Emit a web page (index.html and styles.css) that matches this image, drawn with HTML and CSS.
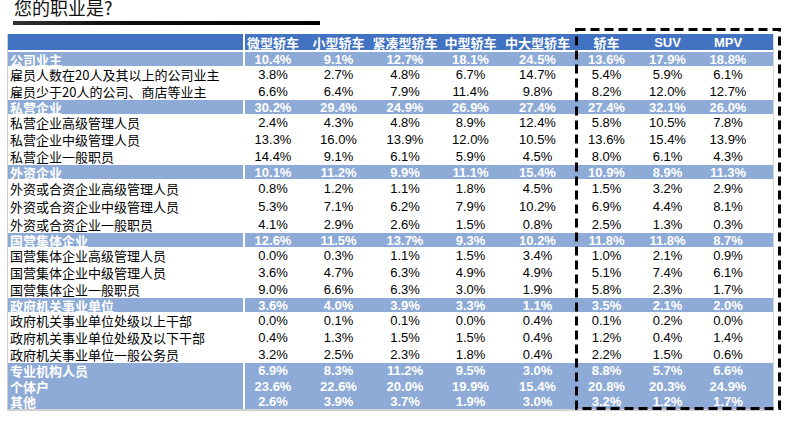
FILE: index.html
```html
<!DOCTYPE html>
<html lang="zh">
<head>
<meta charset="utf-8">
<title>您的职业是?</title>
<link rel="stylesheet" href="styles.css">
</head>
<body>
<div class="page">
  <h1 class="title">您的职业是?</h1>
  <div class="rule"></div>
  <div class="table">
    <div class="row head">
      <div class="lbl"></div>
      <div class="c c1">微型轿车</div><div class="c c2">小型轿车</div><div class="c c3">紧凑型轿车</div><div class="c c4">中型轿车</div><div class="c c5">中大型轿车</div><div class="c c6">轿车</div><div class="c c7">SUV</div><div class="c c8">MPV</div>
    </div>
    <div class="row cat">
      <div class="lbl">公司业主</div>
      <div class="c c1">10.4%</div><div class="c c2">9.1%</div><div class="c c3">12.7%</div><div class="c c4">18.1%</div><div class="c c5">24.5%</div><div class="c c6">13.6%</div><div class="c c7">17.9%</div><div class="c c8">18.8%</div>
    </div>
    <div class="row">
      <div class="lbl">雇员人数在20人及其以上的公司业主</div>
      <div class="c c1">3.8%</div><div class="c c2">2.7%</div><div class="c c3">4.8%</div><div class="c c4">6.7%</div><div class="c c5">14.7%</div><div class="c c6">5.4%</div><div class="c c7">5.9%</div><div class="c c8">6.1%</div>
    </div>
    <div class="row">
      <div class="lbl">雇员少于20人的公司、商店等业主</div>
      <div class="c c1">6.6%</div><div class="c c2">6.4%</div><div class="c c3">7.9%</div><div class="c c4">11.4%</div><div class="c c5">9.8%</div><div class="c c6">8.2%</div><div class="c c7">12.0%</div><div class="c c8">12.7%</div>
    </div>
    <div class="row cat">
      <div class="lbl">私营企业</div>
      <div class="c c1">30.2%</div><div class="c c2">29.4%</div><div class="c c3">24.9%</div><div class="c c4">26.9%</div><div class="c c5">27.4%</div><div class="c c6">27.4%</div><div class="c c7">32.1%</div><div class="c c8">26.0%</div>
    </div>
    <div class="row">
      <div class="lbl">私营企业高级管理人员</div>
      <div class="c c1">2.4%</div><div class="c c2">4.3%</div><div class="c c3">4.8%</div><div class="c c4">8.9%</div><div class="c c5">12.4%</div><div class="c c6">5.8%</div><div class="c c7">10.5%</div><div class="c c8">7.8%</div>
    </div>
    <div class="row">
      <div class="lbl">私营企业中级管理人员</div>
      <div class="c c1">13.3%</div><div class="c c2">16.0%</div><div class="c c3">13.9%</div><div class="c c4">12.0%</div><div class="c c5">10.5%</div><div class="c c6">13.6%</div><div class="c c7">15.4%</div><div class="c c8">13.9%</div>
    </div>
    <div class="row">
      <div class="lbl">私营企业一般职员</div>
      <div class="c c1">14.4%</div><div class="c c2">9.1%</div><div class="c c3">6.1%</div><div class="c c4">5.9%</div><div class="c c5">4.5%</div><div class="c c6">8.0%</div><div class="c c7">6.1%</div><div class="c c8">4.3%</div>
    </div>
    <div class="row cat">
      <div class="lbl">外资企业</div>
      <div class="c c1">10.1%</div><div class="c c2">11.2%</div><div class="c c3">9.9%</div><div class="c c4">11.1%</div><div class="c c5">15.4%</div><div class="c c6">10.9%</div><div class="c c7">8.9%</div><div class="c c8">11.3%</div>
    </div>
    <div class="row tall">
      <div class="lbl">外资或合资企业高级管理人员</div>
      <div class="c c1">0.8%</div><div class="c c2">1.2%</div><div class="c c3">1.1%</div><div class="c c4">1.8%</div><div class="c c5">4.5%</div><div class="c c6">1.5%</div><div class="c c7">3.2%</div><div class="c c8">2.9%</div>
    </div>
    <div class="row tall">
      <div class="lbl">外资或合资企业中级管理人员</div>
      <div class="c c1">5.3%</div><div class="c c2">7.1%</div><div class="c c3">6.2%</div><div class="c c4">7.9%</div><div class="c c5">10.2%</div><div class="c c6">6.9%</div><div class="c c7">4.4%</div><div class="c c8">8.1%</div>
    </div>
    <div class="row tall">
      <div class="lbl">外资或合资企业一般职员</div>
      <div class="c c1">4.1%</div><div class="c c2">2.9%</div><div class="c c3">2.6%</div><div class="c c4">1.5%</div><div class="c c5">0.8%</div><div class="c c6">2.5%</div><div class="c c7">1.3%</div><div class="c c8">0.3%</div>
    </div>
    <div class="row cat">
      <div class="lbl">国营集体企业</div>
      <div class="c c1">12.6%</div><div class="c c2">11.5%</div><div class="c c3">13.7%</div><div class="c c4">9.3%</div><div class="c c5">10.2%</div><div class="c c6">11.8%</div><div class="c c7">11.8%</div><div class="c c8">8.7%</div>
    </div>
    <div class="row">
      <div class="lbl">国营集体企业高级管理人员</div>
      <div class="c c1">0.0%</div><div class="c c2">0.3%</div><div class="c c3">1.1%</div><div class="c c4">1.5%</div><div class="c c5">3.4%</div><div class="c c6">1.0%</div><div class="c c7">2.1%</div><div class="c c8">0.9%</div>
    </div>
    <div class="row">
      <div class="lbl">国营集体企业中级管理人员</div>
      <div class="c c1">3.6%</div><div class="c c2">4.7%</div><div class="c c3">6.3%</div><div class="c c4">4.9%</div><div class="c c5">4.9%</div><div class="c c6">5.1%</div><div class="c c7">7.4%</div><div class="c c8">6.1%</div>
    </div>
    <div class="row">
      <div class="lbl">国营集体企业一般职员</div>
      <div class="c c1">9.0%</div><div class="c c2">6.6%</div><div class="c c3">6.3%</div><div class="c c4">3.0%</div><div class="c c5">1.9%</div><div class="c c6">5.8%</div><div class="c c7">2.3%</div><div class="c c8">1.7%</div>
    </div>
    <div class="row cat">
      <div class="lbl">政府机关事业单位</div>
      <div class="c c1">3.6%</div><div class="c c2">4.0%</div><div class="c c3">3.9%</div><div class="c c4">3.3%</div><div class="c c5">1.1%</div><div class="c c6">3.5%</div><div class="c c7">2.1%</div><div class="c c8">2.0%</div>
    </div>
    <div class="row">
      <div class="lbl">政府机关事业单位处级以上干部</div>
      <div class="c c1">0.0%</div><div class="c c2">0.1%</div><div class="c c3">0.1%</div><div class="c c4">0.0%</div><div class="c c5">0.4%</div><div class="c c6">0.1%</div><div class="c c7">0.2%</div><div class="c c8">0.0%</div>
    </div>
    <div class="row">
      <div class="lbl">政府机关事业单位处级及以下干部</div>
      <div class="c c1">0.4%</div><div class="c c2">1.3%</div><div class="c c3">1.5%</div><div class="c c4">1.5%</div><div class="c c5">0.4%</div><div class="c c6">1.2%</div><div class="c c7">0.4%</div><div class="c c8">1.4%</div>
    </div>
    <div class="row">
      <div class="lbl">政府机关事业单位一般公务员</div>
      <div class="c c1">3.2%</div><div class="c c2">2.5%</div><div class="c c3">2.3%</div><div class="c c4">1.8%</div><div class="c c5">0.4%</div><div class="c c6">2.2%</div><div class="c c7">1.5%</div><div class="c c8">0.6%</div>
    </div>
    <div class="row cat cat15">
      <div class="lbl">专业机构人员</div>
      <div class="c c1">6.9%</div><div class="c c2">8.3%</div><div class="c c3">11.2%</div><div class="c c4">9.5%</div><div class="c c5">3.0%</div><div class="c c6">8.8%</div><div class="c c7">5.7%</div><div class="c c8">6.6%</div>
    </div>
    <div class="row cat cat16">
      <div class="lbl">个体户</div>
      <div class="c c1">23.6%</div><div class="c c2">22.6%</div><div class="c c3">20.0%</div><div class="c c4">19.9%</div><div class="c c5">15.4%</div><div class="c c6">20.8%</div><div class="c c7">20.3%</div><div class="c c8">24.9%</div>
    </div>
    <div class="row cat cat15">
      <div class="lbl">其他</div>
      <div class="c c1">2.6%</div><div class="c c2">3.9%</div><div class="c c3">3.7%</div><div class="c c4">1.9%</div><div class="c c5">3.0%</div><div class="c c6">3.2%</div><div class="c c7">1.2%</div><div class="c c8">1.7%</div>
    </div>
  </div>
  <svg class="dash" width="208" height="384" viewBox="0 0 208 384" aria-hidden="true">
    <rect x="1.5" y="1.5" width="203" height="379" fill="none" stroke="#000" stroke-width="3" stroke-dasharray="9 5"/>
  </svg>
</div>
</body>
</html>
```
FILE: styles.css
```css
html, body {
  margin: 0;
  padding: 0;
  background: #ffffff;
}

.page {
  position: relative;
  width: 789px;
  height: 422px;
  overflow: hidden;
  font-family: "Liberation Sans", "Noto Sans CJK SC", sans-serif;
}

.title {
  margin: -2px 0 0 14px;
  font-family: "Noto Sans CJK SC", sans-serif;
  font-size: 18px;
  line-height: 18px;
  font-weight: 400;
  color: #111;
}

.rule {
  margin: 5px 0 0 13px;
  width: 307px;
  height: 4px;
  background: linear-gradient(to right, #333 0, #111 30%, #000 100%);
}

.table {
  margin: 9px 0 0 7px;
  width: 765px;
  border-left: 1px solid #cfcfcf;
  border-right: 1px solid #d6d6d6;
  border-bottom: 2px solid #d0d0d0;
}

.row {
  display: grid;
  grid-template-columns: 237px 60px 67px 66px 65px 69px 65px 61px 75px;
  height: 17px;
  color: #000;
  font-size: 13px;
  line-height: 13px;
}

.row.tall { height: 18px; }

.row .lbl {
  box-sizing: border-box;
  border-right: 2px solid #fff;
  padding-left: 2px;
  display: flex;
  align-items: center;
  font-family: "Noto Sans CJK SC", sans-serif;
  font-size: 13px;
  line-height: 13px;
  white-space: nowrap;
}

.row .c {
  display: flex;
  align-items: center;
  justify-content: center;
  white-space: nowrap;
  line-height: 13px;
}

.c1 { padding-right: 4px; }
.c6 { padding-left: 4px; }
.c8 { padding-right: 15px; }

.head {
  height: 16px;
  margin-bottom: 2px;
  background: #4272c2;
  color: #fff;
  font-weight: 700;
}

.head .c {
  font-family: "Noto Sans CJK SC", "Liberation Sans", sans-serif;
  font-size: 13px;
  font-weight: 700;
}

.head .c7, .head .c8 {
  font-family: "Liberation Sans", sans-serif;
}

.cat {
  height: 14px;
  background: #8eaad6;
  color: #fff;
  font-weight: 700;
}

.cat .lbl { font-weight: 700; }

.cat.cat15 { height: 15px; }
.cat.cat16 { height: 16px; }

.dash {
  position: absolute;
  left: 575px;
  top: 28px;
}
```
